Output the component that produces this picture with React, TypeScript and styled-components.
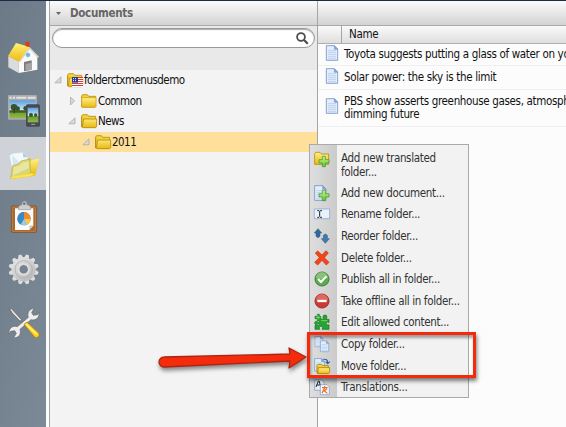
import React from 'react';
import styled, { createGlobalStyle } from 'styled-components';

const Global = createGlobalStyle`
  * { box-sizing: border-box; }
  body {
    margin: 0;
    overflow: hidden;
    font-family: 'DejaVu Sans Condensed', 'DejaVu Sans', sans-serif;
    font-stretch: condensed;
    font-size: 11.5px;
    letter-spacing: -0.34px;
    color: #111;
  }
  svg { display: block; overflow: visible; flex: none; }
`;

const Page = styled.div`
  position: relative;
  display: flex;
  width: 566px;
  height: 427px;
  overflow: hidden;
  border-top: 1px solid #1c2c44;
  background: #fcfcfc;
`;

const Sidebar = styled.nav`
  flex: none;
  width: 46px;
  padding-top: 30px;
  background: linear-gradient(100deg, #6c7a88, #7c8997);
`;

const SideItem = styled.div<{ $active?: boolean }>`
  display: flex;
  align-items: center;
  height: 53px;
  padding-left: 8px;
  background: ${(p) => (p.$active ? '#cfd3d7' : 'transparent')};
`;

const TreePanel = styled.section`
  flex: none;
  width: 269px;
  margin-left: 3px;
  border-left: 1px solid #a5a5a5;
  border-right: 1px solid #a5a5a5;
  background: #f3f3f3;
`;

const PanelHeader = styled.header`
  display: flex;
  align-items: center;
  gap: 9px;
  height: 25px;
  padding-left: 6px;
  border-bottom: 1px solid #a9a9a9;
  background: linear-gradient(#fbfbfb, #d3d3d3);
  color: #666;
  font-weight: bold;
  letter-spacing: -0.3px;
`;

const SearchArea = styled.div`
  height: 44px;
  padding: 2px 2px 0 2px;
  background: #e9e9e9;
`;

const SearchBox = styled.div`
  display: flex;
  align-items: center;
  justify-content: flex-end;
  height: 20px;
  padding-right: 5px;
  border: 1px solid #999;
  border-radius: 10px;
  background: #fff;
  box-shadow: inset 0 1px 1px #aaa;
`;

const TreeRow = styled.div<{ $depth: number; $selected?: boolean }>`
  display: flex;
  align-items: center;
  height: 20.5px;
  padding-left: ${(p) => 4 + p.$depth * 14}px;
  background: ${(p) => (p.$selected ? '#ffe09a' : 'transparent')};
  letter-spacing: -0.52px;
`;

const TreeArrow = styled.span`
  width: 13px;
`;

const TreeLabel = styled.span`
  padding-left: 1px;
`;

const ListPanel = styled.main`
  flex: 1;
  min-width: 0;
`;

const ListHead = styled.div`
  display: flex;
  height: 18px;
  line-height: 17px;
  border-bottom: 1px solid #b0aeae;
  background: linear-gradient(#fafafa, #e0dede);
`;

const HeadCell = styled.div<{ $width?: number }>`
  width: ${(p) => (p.$width ? `${p.$width}px` : 'auto')};
  padding-left: 7px;
  border-right: ${(p) => (p.$width ? '1px solid #a5a5a5' : 'none')};
`;

const DocRow = styled.div<{ $height: number }>`
  display: flex;
  gap: 1px;
  height: ${(p) => p.$height}px;
`;

const IconCell = styled.div`
  width: 21px;
  padding: 0 0 4px 6px;
  border-bottom: 1px solid #efefef;
  display: flex;
  align-items: center;
`;

const DocName = styled.div`
  flex: 1;
  display: flex;
  align-items: center;
  padding-left: 4px;
  border-bottom: 1px solid #efefef;
  line-height: 13px;
  white-space: pre;
`;

const Menu = styled.div`
  position: absolute;
  left: 309px;
  top: 143px;
  width: 160px;
  height: 254px;
  padding-top: 2px;
  border: 1px solid #aaa;
  background: linear-gradient(90deg, #dedede, #cbcbcb 27px, #f2f2f2 27px);
  color: #333;
`;

const MenuItem = styled.div<{ $tall?: boolean }>`
  display: flex;
  align-items: ${(p) => (p.$tall ? 'flex-start' : 'center')};
  gap: 11px;
  height: ${(p) => (p.$tall ? 35 : 21.6)}px;
  padding-top: ${(p) => (p.$tall ? 4 : 0)}px;
  padding-left: 4px;
  line-height: 14px;
  white-space: pre;
`;

const Highlight = styled.div`
  position: absolute;
  left: 307px;
  top: 331px;
  width: 169px;
  height: 46px;
  border: 3px solid #f52a0c;
  box-shadow: 1px 3px 4px rgba(0, 0, 0, 0.5), inset 1px 3px 3px rgba(0, 0, 0, 0.35);
`;

const ArrowLayer = styled.svg`
  position: absolute;
  left: 155px;
  top: 343px;
  filter: drop-shadow(1px 3px 2px rgba(0, 0, 0, 0.45));
`;

const Defs = () => (
  <svg width="0" height="0">
    <defs>
      <linearGradient id="gold" x1="0" y1="0" x2="0" y2="1">
        <stop offset="0" stopColor="#fff08c" />
        <stop offset="1" stopColor="#e9b90e" />
      </linearGradient>
      <linearGradient id="roof" x1="0" y1="0" x2="0" y2="1">
        <stop offset="0" stopColor="#fff17a" />
        <stop offset="1" stopColor="#f0b80c" />
      </linearGradient>
      <linearGradient id="sky" x1="0" y1="0" x2="0" y2="1">
        <stop offset="0" stopColor="#5d9fe0" />
        <stop offset=".55" stopColor="#cfe6f5" />
        <stop offset=".6" stopColor="#6a9a35" />
        <stop offset="1" stopColor="#8fbb3e" />
      </linearGradient>
      <linearGradient id="steel" gradientUnits="userSpaceOnUse" x1="20" y1="10" x2="76" y2="84">
        <stop offset="0" stopColor="#e6e6e6" />
        <stop offset="1" stopColor="#b4b4b4" />
      </linearGradient>
      <linearGradient id="plus" x1="0" y1="0" x2="0" y2="1">
        <stop offset="0" stopColor="#c8f59a" />
        <stop offset="1" stopColor="#63c72e" />
      </linearGradient>
    </defs>
  </svg>
);

const Big = ({ children }: { children: React.ReactNode }) => (
  <svg width="32" height="32" viewBox="0 0 96 96">{children}</svg>
);

const Small = ({ children }: { children: React.ReactNode }) => (
  <svg width="16" height="16" viewBox="0 0 48 48">{children}</svg>
);

const House = () => (
  <Big>
    <path d="M1 42l31 16v35L1 76z" fill="#dcdcdc" />
    <path d="M32 58L65 18l23 27v38l-56 10z" fill="#fafafa" />
    <path d="M24 3l42 12-31 45L0 42z" fill="url(#roof)" />
    <path d="M64 14l29 30-4 4-24-26-29 39-4-2z" fill="#d9d6c8" />
    <path d="M52 0l13-1v17l-13-4z" fill="#d9411e" />
    <circle cx="60" cy="39" r="6.5" fill="#69b9e4" stroke="#9ac5da" />
    <path d="M48 60l23-5v28l-23 5z" fill="#7d7d7d" />
    <path d="M53 66l18-4v21l-18 4z" fill="#a5a5a5" />
  </Big>
);

const Devices = () => (
  <Big>
    <rect width="87" height="74" rx="3" fill="#aaa" />
    <path d="M4 5h7v6H4zM14 5h7v6h-7zM25 5h30v6H25zM59 5h24v6H59z" fill="#e2e2e2" />
    <rect x="5" y="16" width="77" height="53" fill="url(#sky)" />
    <path d="M5 46h77v7H5z" fill="#3c5f28" />
    <circle cx="18" cy="37" r="10" fill="#35562a" />
    <circle cx="29" cy="41" r="7" fill="#35562a" />
    <circle cx="53" cy="40" r="7" fill="#35562a" />
    <path d="M17 40h4v15h-4z" fill="#453c26" />
    <rect x="54" y="28" width="42" height="67" rx="5" fill="#444952" />
    <rect x="59" y="38" width="32" height="44" fill="url(#sky)" />
    <circle cx="69" cy="60" r="6" fill="#35562a" />
    <circle cx="83" cy="60" r="5" fill="#35562a" />
    <rect x="69" y="86" width="13" height="4" rx="2" fill="#999" />
  </Big>
);

const OpenFolder = () => (
  <Big>
    <path d="M58 30l10 2 3 6 24-9-14 54-71 11z" fill="#efbc16" />
    <path d="M66 38l29-8-14 50-15 3z" fill="url(#gold)" />
    <path d="M4 22l11-6 30-3 15 15v30L15 76z" fill="#f3f8fd" stroke="#b7c7d8" />
    <path d="M44 13l2 15 14 0z" fill="#b9cbe0" />
    <path d="M12 20l30 30-26 14z" fill="#d9e6f3" />
    <path d="M14 53l17-5 8-9 26-6 3 43L8 92z" fill="#dad778" stroke="#b8af38" strokeWidth="2" />
    <path d="M17 58l17-5 8-9 20-4 1 20-48 22z" fill="#eeedb0" opacity=".7" />
    <path d="M68 76l13 3-13 6-60 8 3-6z" fill="#ffe44b" />
  </Big>
);

const Clipboard = () => (
  <Big>
    <rect x="10" y="15" width="76" height="79" rx="4" fill="#a8682e" stroke="#7c4a1d" strokeWidth="2" />
    <rect x="13" y="18" width="70" height="73" rx="2" fill="none" stroke="#c98d4c" strokeWidth="2" />
    <path d="M21 22h55v52L64 87H21z" fill="#fbfbfb" />
    <path d="M76 73L64 87V74z" fill="#c6c6c6" />
    <path d="M31 26v-8l7-6h4l1-8 7-4 6 4 1 8h4l7 6v8z" fill="#ccc" stroke="#999" strokeWidth="2" />
    <circle cx="49" cy="8" r="4" fill="#777" />
    <circle cx="48" cy="53" r="20" fill="#3d87c4" />
    <path d="M48 53V33a20 20 0 0 1 20 20z" fill="#f38a25" />
    <path d="M48 53h20a20 20 0 0 1-13 19z" fill="#ffc34d" />
    <path d="M48 53l7 19a20 20 0 0 1-17-2z" fill="#8ed1ef" />
    <path d="M48 53l-10 17a20 20 0 0 1 10-37z" fill="#3d87c4" />
  </Big>
);

const Gear = () => (
  <Big>
    <g fill="url(#steel)">
      {Array.from({ length: 12 }, (_, i) => (
        <path key={i} d="M38 14l5-13h8l5 13z" transform={`rotate(${i * 30 + 15} 47 46)`} />
      ))}
      <path fillRule="evenodd" d="M47 10a36 36 0 1 0 .1 0zm0 23a13 13 0 1 1-.1 0z" />
    </g>
    <circle cx="47" cy="46" r="26" fill="none" stroke="#aeaeae" strokeWidth="2.5" />
    <circle cx="47" cy="46" r="16" fill="none" stroke="#e0e0e0" strokeWidth="5" />
  </Big>
);

const Tools = () => (
  <Big>
    <path d="M5 6l5-2 8 9 23 25-5 5L12 18z" fill="#ddd" stroke="#555" strokeWidth="2" />
    <path
      d="M61 31c-5-12 3-26 17-27l-7 13 5 8 13-2 3-8c5 16-9 27-23 23L36 67c5 15-5 27-19 25l8-13-5-8-12 2-5 8c-2-17 11-27 25-22z"
      fill="#eee" stroke="#666" strokeWidth="2"
    />
    <path d="M48 52l9-7 35 33c6 9-5 18-13 11z" fill="#ffd21f" stroke="#987b0c" strokeWidth="2" />
    <path d="M54 52l32 30" stroke="#fff2a0" strokeWidth="4" />
  </Big>
);

const Folder = ({ open, flag }: { open?: boolean; flag?: boolean }) => (
  <svg width="16" height="16" viewBox="0 0 48 48">
    <path d="M2 42V9l3-4h14l4 5h21v32z" fill="#f4d238" stroke="#b38d10" strokeWidth="2.5" />
    {open ? (
      <path d="M2 42V12M8 18h39v22l-3 4H6l-2-3z" fill="url(#gold)" stroke="#b38d10" strokeWidth="2.5" />
    ) : (
      <path d="M2 14h43v26l-3 3H4l-2-3z" fill="url(#gold)" stroke="#c19b15" strokeWidth="2" />
    )}
    {flag && (
      <g>
        <path d="M15 15h33v30H15z" fill="#fff" />
        <path d="M15 16.500h33M15 22.500h33M15 28.500h33M15 34.500h33M15 40.500h33" stroke="#d53c35" strokeWidth="3" />
        <path d="M15 15h18v17H15z" fill="#203c9a" />
        <path d="M18 20h12M18 26h12" stroke="#fff" strokeWidth="3" strokeDasharray="3 3" />
      </g>
    )}
  </svg>
);

const Sheet = ({ dx = 0, dy = 0, s = 1 }) => (
  <g transform={`translate(${dx} ${dy}) scale(${s})`}>
    <path d="M7 2h24l10 10v34H7z" fill="#e3eefb" stroke="#7292c8" strokeWidth="2.500" />
    <path d="M31 2v11h10z" fill="#8eabe0" stroke="#6888c0" strokeWidth="1.500" />
    <path d="M12 17h24M12 23h24M12 29h24M12 35h24M12 41h24" stroke="#aac4e6" strokeWidth="2" />
  </g>
);

const PlusSign = () => (
  <path d="M25 16h9v10h11v10H34v11h-9V36H15V26h10z" fill="url(#plus)" stroke="#3c9320" strokeWidth="2" />
);

const menuItems: { label: string; icon: React.ReactNode; tall?: boolean }[] = [
  {
    label: 'Add new translated\nfolder...',
    tall: true,
    icon: (
      <Small>
        <path d="M2 40V8l3-4h13l4 5h22v31z" fill="url(#gold)" stroke="#b38d10" strokeWidth="2.5" />
        <PlusSign />
      </Small>
    ),
  },
  { label: 'Add new document...', icon: <Small><Sheet dx={-5} /><PlusSign /></Small> },
  {
    label: 'Rename folder...',
    icon: (
      <Small>
        <path d="M1 9h46v29H1z" fill="#e8f1fc" stroke="#7a9bcc" strokeWidth="2" />
        <path d="M10 14h5l2 2 2-2h5M17 16v15M10 34h5l2-2 2 2h5" fill="none" stroke="#222" strokeWidth="3" />
      </Small>
    ),
  },
  {
    label: 'Reorder folder...',
    icon: (
      <Small>
        <path d="M12 2l11 13h-5v10l-6 4-6-4V15H1z" fill="#34699a" stroke="#1e4f80" strokeWidth="1.5" />
        <path d="M34 46l12-14h-6V22l-6-4-6 4v10h-6z" fill="#417aab" stroke="#1e4f80" strokeWidth="1.5" />
      </Small>
    ),
  },
  {
    label: 'Delete folder...',
    icon: <Small><path d="M4 9l7-6 13 12L36 2l7 7-12 14 14 14-8 8-13-14-13 14-9-8 14-14z" fill="#f44519" stroke="#c92b09" strokeWidth="2" /></Small>,
  },
  {
    label: 'Publish all in folder...',
    icon: (
      <Small>
        <circle cx="24" cy="24" r="21" fill="#5daa4d" stroke="#3b813a" strokeWidth="3" />
        <path d="M6 21a18 18 0 0 1 36 0q-18 8-36 0z" fill="#9acc87" opacity=".7" />
        <path d="M12 24l9 9 16-17" fill="none" stroke="#fff" strokeWidth="6" />
      </Small>
    ),
  },
  {
    label: 'Take offline all in folder...',
    icon: (
      <Small>
        <circle cx="24" cy="24" r="21" fill="#ca3b34" stroke="#a52c28" strokeWidth="3" />
        <path d="M6 21a18 18 0 0 1 36 0q-18 8-36 0z" fill="#e77b70" opacity=".7" />
        <path d="M10 24h28" stroke="#fff" strokeWidth="7" />
      </Small>
    ),
  },
  {
    label: 'Edit allowed content...',
    icon: (
      <Small>
        <path
          d="M10 1v6H3v7h7v6h6c0 5-3 6-6 3s-8-1-8 4 5 7 9 3 5 0 4 4H3v12h14c-3-6 0-9 4-9s6 4 3 9h21V32c-5 3-8 0-8-4s4-6 8-2V16h-9c5-6 3-13-3-13s-8 6-4 13h-7v-2h-2V7h-4V1z"
          fill="#27a332" stroke="#13741e" strokeWidth="2"
        />
        <path d="M12 4v12M6 10h12M22 20h18" fill="none" stroke="#73d56a" strokeWidth="3" />
      </Small>
    ),
  },
  { label: 'Copy folder...', icon: <Small><Sheet dx={-2} s={0.7} /><Sheet dx={14} dy={13} s={0.74} /></Small> },
  {
    label: 'Move folder...',
    icon: (
      <Small>
        <Sheet dx={-4} s={0.85} />
        <path d="M28 4q13-2 13 10M35 11l6 6 6-6" fill="none" stroke="#28639b" strokeWidth="3.5" />
        <path d="M9 45V22l3-3h10l4 4h17v22z" fill="#f4d238" stroke="#a98108" strokeWidth="2.5" />
        <path d="M13 29h34v15l-3 3H11z" fill="url(#gold)" stroke="#a98108" strokeWidth="2.5" />
      </Small>
    ),
  },
  {
    label: 'Translations...',
    icon: (
      <Small>
        <path d="M2 2h21l7 7v25H2z" fill="#e4eefa" stroke="#7898c8" strokeWidth="2" />
        <path d="M6 24l7-18h2l6 18M8 18h11" fill="none" stroke="#222" strokeWidth="3" />
        <path d="M19 17h20l7 7v23H19z" fill="#f5f8fd" stroke="#7898c8" strokeWidth="2" />
        <path d="M24 26h17M32 21v5l-8 17M28 33l12 10M39 29l-9 7" fill="none" stroke="#ee6d18" strokeWidth="3.5" />
      </Small>
    ),
  },
];

const treeItems = [
  { label: 'folderctxmenusdemo', depth: 0, expanded: true, open: true, flag: true },
  { label: 'Common', depth: 1, expanded: false, open: false },
  { label: 'News', depth: 1, expanded: true, open: true },
  { label: '2011', depth: 2, expanded: true, open: true, selected: true },
];

const documents = [
  { name: 'Toyota suggests putting a glass of water on yo', height: 22 },
  { name: 'Solar power: the sky is the limit', height: 24 },
  { name: 'PBS show asserts greenhouse gases, atmosph\ndimming future', height: 37 },
];

export default function App() {
  return (
    <>
      <Global />
      <Page>
        <Sidebar>
          <SideItem><House /></SideItem>
          <SideItem><Devices /></SideItem>
          <SideItem $active><OpenFolder /></SideItem>
          <SideItem><Clipboard /></SideItem>
          <SideItem><Gear /></SideItem>
          <SideItem><Tools /></SideItem>
        </Sidebar>
        <TreePanel>
          <PanelHeader>
            <svg width="5" height="3" viewBox="0 0 5 3"><path d="M0 0h5L2.500 3z" fill="#666" /></svg>
            Documents
          </PanelHeader>
          <SearchArea>
            <SearchBox>
              <svg width="13" height="13" viewBox="0 0 13 13">
                <circle cx="5" cy="5" r="3.900" fill="none" stroke="#4d4d4d" strokeWidth="1.800" />
                <path d="M8 8l3.800 3.800" stroke="#4d4d4d" strokeWidth="2.200" />
              </svg>
            </SearchBox>
          </SearchArea>
          {treeItems.map((t) => (
            <TreeRow key={t.label} $depth={t.depth} $selected={t.selected}>
              <TreeArrow>
                <svg width="8" height="8" viewBox="0 0 8 8">
                  <path
                    d={t.expanded ? 'M7 .8v6H.8z' : 'M2.500 0v8l4-4z'}
                    fill="#d9d9d9" stroke="#aaa" strokeWidth=".8"
                  />
                </svg>
              </TreeArrow>
              <Folder open={t.open} flag={t.flag} />
              <TreeLabel>{t.label}</TreeLabel>
            </TreeRow>
          ))}
        </TreePanel>
        <ListPanel>
          <PanelHeader />
          <ListHead>
            <HeadCell $width={24} />
            <HeadCell>Name</HeadCell>
          </ListHead>
          {documents.map((d) => (
            <DocRow key={d.name} $height={d.height}>
              <IconCell><Small><Sheet /></Small></IconCell>
              <DocName>{d.name}</DocName>
            </DocRow>
          ))}
        </ListPanel>
        <Menu>
          {menuItems.map((m) => (
            <MenuItem key={m.label} $tall={m.tall}>
              {m.icon}
              <span>{m.label}</span>
            </MenuItem>
          ))}
        </Menu>
        <Highlight />
        <ArrowLayer width="155" height="30" viewBox="155 344 155 30">
          <path
            d="M164 357l126-3-1-6 17 9-17 11 1-7-126 6a5 5 0 0 1 0-10z"
            fill="#f52c0c" stroke="#ad2413" strokeWidth="1.300" strokeLinejoin="round"
          />
        </ArrowLayer>
      </Page>
      <Defs />
    </>
  );
}
